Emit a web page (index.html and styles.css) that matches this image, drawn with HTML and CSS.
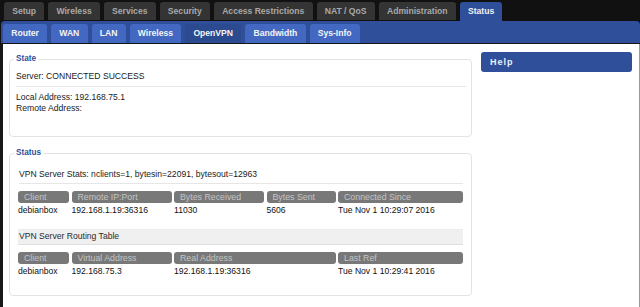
FILE: index.html
```html
<!DOCTYPE html>
<html lang="en">
<head>
<meta charset="utf-8">
<title>Status - OpenVPN</title>
<link rel="stylesheet" href="styles.css">
</head>
<body>
<div class="page">
  <header class="header">
    <nav class="mainnav">
      <a class="tab">Setup</a>
      <a class="tab">Wireless</a>
      <a class="tab">Services</a>
      <a class="tab">Security</a>
      <a class="tab">Access Restrictions</a>
      <a class="tab">NAT / QoS</a>
      <a class="tab">Administration</a>
      <a class="tab active">Status</a>
    </nav>
    <nav class="subnav">
      <a class="subtab">Router</a>
      <a class="subtab">WAN</a>
      <a class="subtab">LAN</a>
      <a class="subtab">Wireless</a>
      <a class="subtab active">OpenVPN</a>
      <a class="subtab">Bandwidth</a>
      <a class="subtab">Sys-Info</a>
    </nav>
  </header>
  <div class="content">
    <main class="main">
      <fieldset class="box state">
        <legend>State</legend>
        <div class="row">Server: CONNECTED SUCCESS</div>
        <div class="sep"></div>
        <div class="row">Local Address: 192.168.75.1</div>
        <div class="row">Remote Address:</div>
      </fieldset>
      <fieldset class="box status">
        <legend>Status</legend>
        <div class="inner">
          <div class="row stats">VPN Server Stats: nclients=1, bytesin=22091, bytesout=12963</div>
          <div class="sep"></div>
          <div class="grid clients">
            <div class="th">Client</div>
            <div class="th">Remote IP:Port</div>
            <div class="th">Bytes Received</div>
            <div class="th">Bytes Sent</div>
            <div class="th">Connected Since</div>
            <div class="td">debianbox</div>
            <div class="td">192.168.1.19:36316</div>
            <div class="td">11030</div>
            <div class="td">5606</div>
            <div class="td">Tue Nov 1 10:29:07 2016</div>
          </div>
          <div class="band">VPN Server Routing Table</div>
          <div class="grid routes">
            <div class="th">Client</div>
            <div class="th">Virtual Address</div>
            <div class="th wide">Real Address</div>
            <div class="th">Last Ref</div>
            <div class="td">debianbox</div>
            <div class="td">192.168.75.3</div>
            <div class="td wide">192.168.1.19:36316</div>
            <div class="td">Tue Nov 1 10:29:41 2016</div>
          </div>
        </div>
      </fieldset>
    </main>
    <aside class="side">
      <div class="help">Help</div>
    </aside>
  </div>
</div>
</body>
</html>
```
FILE: styles.css
```css
html, body {
  margin: 0;
  padding: 0;
  height: 100%;
  background: #ffffff;
}
body {
  font-family: "Liberation Sans", Arial, sans-serif;
  font-size: 8.6px;
  line-height: 11px;
  color: #1a1a1a;
}
.page {
  min-height: 100vh;
  display: flex;
  flex-direction: column;
}
.header {
  background: #111;
}
.mainnav {
  display: flex;
  align-items: flex-start;
  gap: 4px;
  padding: 2px 0 0 4px;
  height: 19px;
}
.tab {
  display: block;
  height: 18px;
  line-height: 18px;
  padding: 0 8.2px;
  background: #343434;
  color: #a9a9a9;
  font-weight: bold;
  border-radius: 3px 3px 0 0;
}
.tab.active {
  height: 19px;
  background: #2f4f9b;
  color: #f2f2f2;
}
.subnav {
  display: flex;
  align-items: flex-end;
  gap: 4px;
  margin-left: 1px;
  height: 22px;
  padding-left: 2px;
  background: #2f4f9b;
  border-radius: 4px 4px 0 0;
  border-bottom: 1px solid #151515;
}
.subtab {
  display: block;
  height: 19px;
  line-height: 19px;
  padding: 0 8.2px;
  background: #4368c2;
  color: #f4f4f4;
  font-weight: bold;
  border-radius: 3px 3px 0 0;
}
.subtab.active {
  background: #2b4a8f;
}
.content {
  flex: 1;
  display: grid;
  grid-template-columns: 463px 151px;
  column-gap: 9px;
  align-items: start;
  padding: 8px 6px 0 6px;
  border-left: 3px solid #171717;
  border-right: 1px solid #999;
}
.box {
  margin: 0;
  padding: 6px 5px 0 6px;
  border: 1px solid #e3e3e3;
  border-radius: 4px;
  min-width: 0;
}
.box legend {
  padding: 0 2px;
  margin-left: -2px;
  font-size: 8.2px;
  line-height: 10px;
  font-weight: bold;
  color: #2f4f9b;
}
.state {
  margin-top: 2px;
  padding-top: 7px;
  padding-bottom: 22px;
}
.status {
  margin-top: 11px;
  padding-top: 11px;
  padding-bottom: 18px;
}
.row {
  height: 11px;
}
.sep {
  height: 1px;
  background: #e6e6e6;
  margin: 4px 0 4px 0;
}
.state .sep {
  margin-bottom: 5px;
}
.inner {
  padding: 0 3px 0 2px;
}
.stats {
  padding-left: 1px;
}
.inner .sep {
  margin: 3px 0 7px 1px;
}
.grid {
  display: grid;
  column-gap: 2.5px;
  row-gap: 2px;
}
.clients {
  grid-template-columns: 51px 100px 90px 69px 1fr;
}
.routes {
  grid-template-columns: 51px 100px 161.5px 1fr;
}
.th {
  height: 12px;
  line-height: 12px;
  padding-left: 6px;
  background: #787878;
  color: #c4c4c4;
  border-radius: 3px;
  font-size: 8.8px;
}
.td {
  height: 11px;
  line-height: 11px;
  color: #111;
}
.band {
  margin-top: 13px;
  height: 14px;
  line-height: 12px;
  padding-left: 1px;
  background: #f0f0f0;
  border-top: 1px solid #ececec;
  border-bottom: 1px solid #dedede;
  color: #2a2a2a;
  margin-bottom: 7px;
}
.help {
  height: 20px;
  line-height: 20px;
  padding-left: 9px;
  background: #2f4f9b;
  color: #eef0f6;
  font-weight: bold;
  font-size: 9px;
  letter-spacing: 1px;
  border-radius: 3px;
}
```
